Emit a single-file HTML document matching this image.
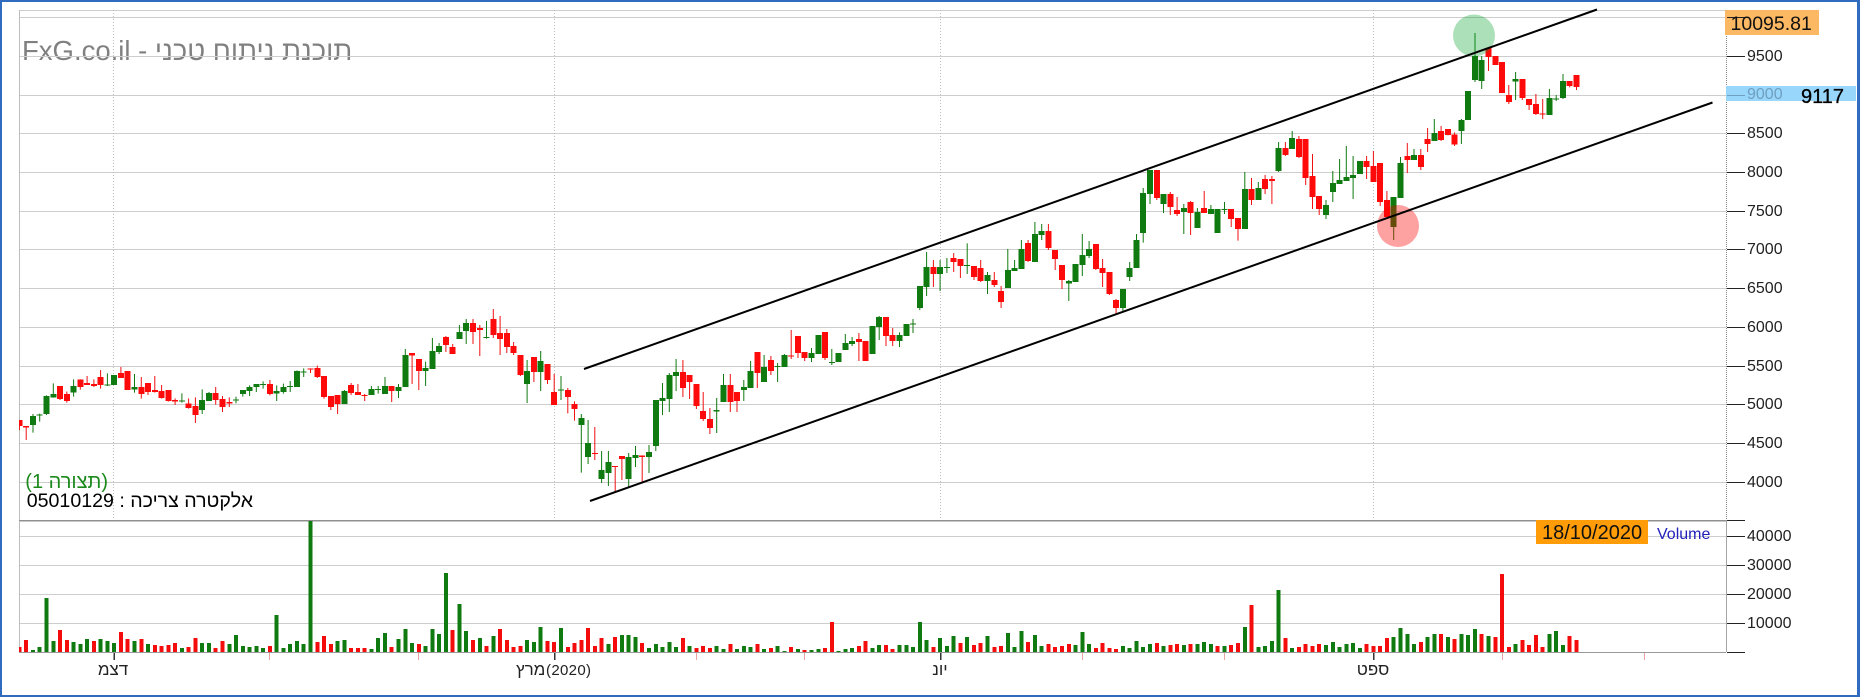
<!DOCTYPE html>
<html lang="he"><head><meta charset="utf-8"><title>FxG.co.il</title>
<style>
html,body{margin:0;padding:0;background:#fff}
#p{position:relative;width:1860px;height:697px;overflow:hidden;background:#fff;font-family:"Liberation Sans",Arial,sans-serif}
#p svg{position:absolute;left:0;top:0}
#b{position:absolute;left:0;top:0;width:1855px;height:693px;border:solid #2f6cc0;border-width:2px 3px 2px 2px}
.t{position:absolute;white-space:nowrap;line-height:1}
</style></head><body><div id="p">
<svg width="1860" height="697" viewBox="0 0 1860 697" fill="none" font-family="'Liberation Sans',Arial,sans-serif">
<text x="22" y="60" font-size="27.5" style="fill:#808080">FxG.co.il - תוכנת ניתוח טכני</text>
<g stroke="#cdcdcd" shape-rendering="crispEdges">
<path d="M19 10.5H1726M19 17.5H1726M19 56.5H1726M19 95.5H1726M19 133.5H1726M19 172.5H1726M19 211.5H1726M19 249.5H1726M19 288.5H1726M19 327.5H1726M19 366.5H1726M19 404.5H1726M19 443.5H1726M19 482.5H1726M19 536.5H1726M19 565.5H1726M19 594.5H1726M19 623.5H1726"/>
<path d="M19.5 10V652" stroke="#bdbdbd"/>
<path d="M113.5 10V518M554.5 10V518M940.5 10V518M1373.5 10V518" stroke="#bbb" stroke-dasharray="1 2"/>
<path d="M19 520.5H1726" stroke="#8f8f8f"/><path d="M19 521.5H1726" stroke="#c8c8c8"/>
<path d="M1726.5 10V520" stroke="#888" stroke-dasharray="1 1"/><path d="M1726.5 520V652" stroke="#a5a5a5"/>
</g>
<g shape-rendering="crispEdges" stroke-width="4" transform="translate(0,480) scale(1,.33333)">
<path stroke="#f40c0c" d="M19.4 517V501M26.2 517V480M60 517V450M66.8 517V480M93.9 517V483M120.9 517V456M127.7 517V477M141.3 517V477M154.8 517V495M161.6 517V498M168.3 517V495M175.1 517V489M188.6 517V501M195.4 517V474M215.7 517V504M222.5 517V483M269.9 517V498M317.3 517V486M324 517V468M330.8 517V492M351.1 517V504M357.9 517V504M364.7 517V504M391.7 517V501M418.8 517V492M452.7 517V450M473 517V480M486.5 517V498M500.1 517V447M506.8 517V480M513.6 517V501M520.4 517V498M547.5 517V483M554.2 517V486M567.8 517V501M574.5 517V489M581.3 517V480M588.1 517V444M594.8 517V498M601.6 517V474M615.2 517V471M642.2 517V489M682.9 517V474M696.4 517V504M703.2 517V498M709.9 517V504M730.3 517V492M757.3 517V492M770.9 517V504M791.2 517V501M804.7 517V510M825 517V504M831.8 517V426M858.9 517V498M865.7 517V483M886 517V495M892.7 517V507M933.4 517V501M960.4 517V489M974 517V495M980.7 517V489M994.3 517V501M1001.1 517V498M1028.1 517V486M1048.4 517V492M1055.2 517V501M1062 517V498M1068.8 517V492M1095.8 517V504M1102.6 517V489M1109.4 517V504M1116.1 517V507M1156.8 517V489M1170.3 517V495M1177.1 517V492M1190.6 517V492M1217.7 517V498M1231.2 517V495M1238 517V489M1251.5 517V375M1285.4 517V474M1298.9 517V501M1305.7 517V492M1312.5 517V498M1319.2 517V492M1366.6 517V492M1373.4 517V498M1380.2 517V498M1386.9 517V474M1420.8 517V486M1441.1 517V462M1454.6 517V477M1481.7 517V462M1495.3 517V471M1502 517V282M1508.8 517V501M1522.3 517V480M1529.1 517V495M1535.9 517V465M1542.7 517V501M1569.7 517V468M1576.5 517V480"/>
<path stroke="#0f7a0f" d="M33 517V510M39.7 517V501M46.5 517V354M53.3 517V483M73.6 517V486M80.3 517V492M87.1 517V477M100.6 517V477M107.4 517V483M114.2 517V489M134.5 517V483M148 517V492M181.9 517V504M202.2 517V489M209 517V489M229.3 517V492M236 517V465M242.8 517V498M249.6 517V501M256.3 517V498M263.1 517V504M276.7 517V405M283.4 517V504M290.2 517V492M297 517V483M303.7 517V492M310.5 517V123M337.6 517V483M344.4 517V480M371.4 517V507M378.2 517V474M385 517V459M398.5 517V477M405.3 517V447M412.1 517V489M425.6 517V498M432.4 517V447M439.1 517V462M445.9 517V279M459.4 517V372M466.2 517V453M479.8 517V474M493.3 517V468M527.1 517V480M533.9 517V486M540.7 517V441M561 517V444M608.4 517V492M621.9 517V465M628.7 517V465M635.5 517V471M649 517V504M655.8 517V492M662.5 517V501M669.3 517V486M676.1 517V501M689.6 517V498M716.7 517V498M723.5 517V507M737 517V507M743.8 517V498M750.6 517V501M764.1 517V507M777.6 517V498M784.4 517V513M798 517V507M811.5 517V510M818.3 517V507M838.6 517V513M845.3 517V507M852.1 517V504M872.4 517V504M879.2 517V495M899.5 517V495M906.3 517V495M913 517V501M919.8 517V426M926.6 517V480M940.1 517V474M946.9 517V498M953.7 517V468M967.2 517V471M987.5 517V468M1007.8 517V459M1014.6 517V501M1021.4 517V453M1034.9 517V465M1041.7 517V498M1075.5 517V495M1082.3 517V456M1089.1 517V492M1122.9 517V498M1129.7 517V504M1136.5 517V483M1143.2 517V501M1150 517V492M1163.5 517V498M1183.8 517V495M1197.4 517V492M1204.2 517V486M1210.9 517V492M1224.5 517V498M1244.8 517V441M1258.3 517V501M1265.1 517V498M1271.9 517V483M1278.6 517V330M1292.2 517V504M1326 517V495M1332.8 517V486M1339.6 517V501M1346.3 517V492M1353.1 517V489M1359.9 517V504M1393.7 517V471M1400.5 517V444M1407.3 517V462M1414 517V492M1427.6 517V471M1434.3 517V462M1447.9 517V471M1461.4 517V462M1468.2 517V465M1475 517V447M1488.5 517V468M1515.6 517V492M1549.4 517V462M1556.2 517V453M1563 517V495"/>
</g>
<g shape-rendering="crispEdges" transform="translate(0,240) scale(1,.33333)">
<path stroke="#f01010" stroke-width="1" d="M19.4 540V570M26.2 558V600M60 438V480M66.8 455V488M80.3 418V449M87.1 408V435M93.9 418V441M100.6 390V446M120.9 381V414M127.7 393V450M141.3 411V476M148 429V465M154.8 408V458M161.6 435V476M168.3 450V485M175.1 475V495M188.6 475V506M195.4 472V549M215.7 441V494M222.5 468V516M229.3 472V501M269.9 420V466M310.5 385V399M317.3 377V414M324 408V476M330.8 468V510M337.6 465V522M351.1 429V465M357.9 432V465M364.7 462V483M391.7 438V486M412.1 339V432M418.8 357V450M445.9 288V336M452.7 312V342M473 237V312M479.8 255V348M493.3 207V294M500.1 228V345M506.8 267V339M513.6 306V345M520.4 345V408M533.9 351V426M547.5 372V432M554.2 402V495M682.9 360V471M689.6 405V477M696.4 432V507M703.2 456V543M709.9 504V582M730.3 402V516M737 456V516M757.3 336V444M770.9 348V405M791.2 270V357M798 288V354M804.7 336V363M825 276V360M858.9 279V363M865.7 303V363M886 231V318M892.7 264V318M933.4 60V141M953.7 39V96M960.4 57V114M974 78V120M980.7 60V126M994.3 96V141M1001.1 138V204M1028.1 0V66M1048.4 -48V30M1055.2 30V90M1062 75V147M1095.8 12V90M1102.6 57V141M1109.4 96V165M1116.1 177V222"/>
<path stroke="#ff0a0a" stroke-width="6" d="M19.4 540V558M26.2 558V563M60 438V477M66.8 462V483M80.3 418V441M87.1 429V435M93.9 432V438M100.6 411V435M120.9 399V414M127.7 393V450M141.3 441V462M148 429V456M154.8 450V456M161.6 453V474M168.3 450V483M175.1 480V485M188.6 491V504M195.4 498V525M215.7 459V480M222.5 477V501M229.3 486V490M269.9 432V462M310.5 385V388M317.3 384V411M324 408V471M330.8 468V501M337.6 465V492M351.1 435V459M357.9 456V465M364.7 465V468M391.7 438V453M412.1 339V347M418.8 357V393M445.9 291V315M452.7 321V342M473 249V276M479.8 264V270M493.3 237V285M500.1 279V297M506.8 279V321M513.6 318V339M520.4 345V405M533.9 351V396M547.5 372V420M554.2 456V495M682.9 396V444M689.6 405V426M696.4 432V498M703.2 513V537M709.9 537V564M730.3 435V486M737 456V483M757.3 336V399M770.9 360V393M791.2 346V349M798 288V339M804.7 336V354M825 276V354M858.9 297V306M865.7 303V363M886 231V288M892.7 285V303M933.4 81V102M953.7 54V66M960.4 57V78M974 78V111M980.7 84V123M994.3 120V135M1001.1 153V186M1028.1 9V63M1048.4 -27V24M1055.2 30V57M1062 75V120M1095.8 12V87M1102.6 84V99M1109.4 96V162M1116.1 180V204"/>
<path stroke="#0f7a0f" stroke-width="1" d="M33 522V578M39.7 521V545M46.5 466V525M53.3 430V473M73.6 418V470M107.4 400V438M114.2 405V435M134.5 402V458M181.9 460V488M202.2 448V522M209 456V483M236 470V490M242.8 450V470M249.6 436V468M256.3 432V456M263.1 424V446M276.7 436V483M283.4 431V461M290.2 423V456M297 391V441M303.7 385V411M344.4 450V492M371.4 438V465M378.2 438V461M385 411V462M398.5 432V474M405.3 327V441M425.6 365V438M432.4 294V387M439.1 309V342M459.4 255V297M466.2 237V312M486.5 243V296M527.1 360V489M540.7 333V453M669.3 399V516M676.1 357V453M716.7 474V579M723.5 402V486M743.8 420V483M750.6 363V444M764.1 345V426M777.6 369V426M784.4 342V381M811.5 324V366M818.3 285V342M831.8 327V375M838.6 339V366M845.3 282V330M852.1 291V318M872.4 258V342M879.2 228V300M899.5 277V321M906.3 252V288M913 237V279M919.8 138V210M926.6 36V168M940.1 60V153M946.9 54V99M967.2 10V102M987.5 96V162M1007.8 27V144M1014.6 60V93M1021.4 0V87M1034.9 -54V66M1041.7 -48V0M1068.8 120V183M1075.5 72V126M1082.3 -18V108M1089.1 3V54M1122.9 147V213M1129.7 66V123M1136.5 -18V84"/>
<path stroke="#0f7a0f" stroke-width="6" d="M33 528V555M39.7 523V526M46.5 468V522M53.3 462V473M73.6 438V458M107.4 433V436M114.2 405V435M134.5 441V449M181.9 481V485M202.2 480V510M209 459V483M236 479V482M242.8 450V462M249.6 441V453M256.3 432V441M263.1 432V435M276.7 453V461M283.4 441V456M290.2 438V441M297 393V441M303.7 394V397M344.4 453V492M371.4 447V465M378.2 447V450M385 438V462M398.5 441V453M405.3 345V441M425.6 384V393M432.4 333V387M439.1 318V336M459.4 276V297M466.2 249V273M486.5 291V294M527.1 393V432M540.7 363V396M669.3 405V477M676.1 396V408M716.7 510V515M723.5 435V486M743.8 441V450M750.6 393V444M764.1 381V426M777.6 378V381M784.4 345V381M811.5 339V354M818.3 285V342M831.8 366V369M838.6 339V366M845.3 309V330M852.1 303V312M872.4 258V342M879.2 231V261M899.5 285V303M906.3 252V288M913 250V253M919.8 138V204M926.6 81V141M940.1 81V102M946.9 81V84M967.2 75V78M987.5 105V123M1007.8 90V144M1014.6 84V93M1021.4 27V87M1034.9 -18V66M1041.7 -27V-15M1068.8 123V131M1075.5 72V126M1082.3 45V75M1089.1 27V48M1122.9 147V204M1129.7 84V111M1136.5 0V84"/>
</g>
<g shape-rendering="crispEdges" transform="translate(0,380) scale(1,.33333)">
<path stroke="#f01010" stroke-width="1" d="M567.8 24V100M574.5 64V122M594.8 141V240M615.2 258V336M621.9 228V300M642.2 226V309"/>
<path stroke="#ff0a0a" stroke-width="6" d="M567.8 30V51M574.5 72V87M594.8 219V222M615.2 258V261M621.9 228V237M642.2 226V231"/>
<path stroke="#0f7a0f" stroke-width="1" d="M561 -12V60M581.3 102V278M588.1 120V252M601.6 213V309M608.4 213V318M628.7 219V321M635.5 198V261M649 195V279M655.8 60V213M662.5 9V105"/>
<path stroke="#0f7a0f" stroke-width="6" d="M561 28V32M581.3 114V135M588.1 189V231M601.6 270V297M608.4 246V279M628.7 231V297M635.5 225V234M649 216V231M655.8 60V198M662.5 54V63"/>
</g>
<g shape-rendering="crispEdges" transform="translate(0,120) scale(1,.33333)">
<path stroke="#f01010" stroke-width="1" d="M1156.8 150V240M1170.3 216V285M1177.1 231V288M1190.6 243V345M1204.2 213V279M1231.2 267V321M1238 294V362"/>
<path stroke="#ff0a0a" stroke-width="6" d="M1156.8 150V234M1170.3 222V261M1177.1 270V282M1190.6 246V279M1204.2 264V279M1231.2 267V297M1238 294V327"/>
<path stroke="#0f7a0f" stroke-width="1" d="M1143.2 204V368M1150 150V252M1163.5 222V279M1183.8 252V342M1197.4 264V324M1210.9 255V282M1217.7 267V339M1224.5 246V282M1244.8 156V327"/>
<path stroke="#0f7a0f" stroke-width="6" d="M1143.2 219V339M1150 150V222M1163.5 222V252M1183.8 264V276M1197.4 276V324M1210.9 267V282M1217.7 267V339M1224.5 267V270M1244.8 207V327"/>
</g>
<g shape-rendering="crispEdges" transform="scale(1,.33333)">
<path stroke="#f01010" stroke-width="1" d="M1251.5 534V615M1265.1 525V582M1271.9 528V612M1285.4 426V468M1298.9 408V474M1305.7 417V555M1312.5 462V627M1319.2 588V645M1366.6 468V537M1373.4 453V546M1380.2 489V618M1386.9 573V651M1407.3 429V519M1420.8 447V510M1427.6 384V456M1441.1 378V423M1447.9 387V406M1454.6 397V438M1488.5 144V213M1495.3 168V195M1502 186V279M1508.8 255V312M1522.3 237V300M1529.1 297V330M1535.9 282V345M1542.7 297V357M1569.7 243V262M1576.5 225V270"/>
<path stroke="#ff0a0a" stroke-width="6" d="M1251.5 567V600M1265.1 537V567M1271.9 537V543M1285.4 444V465M1298.9 417V471M1305.7 417V534M1312.5 528V591M1319.2 588V627M1366.6 483V501M1373.4 498V546M1380.2 489V606M1386.9 600V651M1407.3 468V480M1420.8 465V501M1427.6 417V432M1441.1 393V420M1447.9 387V405M1454.6 403V433M1488.5 144V171M1495.3 168V195M1502 186V279M1508.8 285V306M1522.3 237V294M1529.1 297V315M1535.9 312V342M1542.7 340V343M1569.7 243V258M1576.5 225V261"/>
<path stroke="#0f7a0f" stroke-width="1" d="M1258.3 546V600M1278.6 426V516M1292.2 393V447M1326 600V657M1332.8 513V606M1339.6 477V552M1346.3 438V543M1353.1 468V597M1359.9 483V522M1393.7 591V720M1400.5 471V594M1414 447V480M1434.3 357V423M1461.4 357V432M1468.2 273V360M1475 99V246M1481.7 168V267M1515.6 216V300M1549.4 267V345M1556.2 285V303M1563 222V297"/>
<path stroke="#0f7a0f" stroke-width="6" d="M1258.3 564V600M1278.6 444V513M1292.2 414V447M1326 615V645M1332.8 549V576M1339.6 540V552M1346.3 531V543M1353.1 525V534M1359.9 483V522M1393.7 591V681M1400.5 489V594M1414 465V480M1434.3 399V423M1461.4 360V393M1468.2 273V360M1475 168V240M1481.7 180V243M1515.6 237V245M1549.4 294V345M1556.2 295V298M1563 243V294"/>
</g>
<rect x="2" y="340" width="17" height="314" fill="#fff"/>
<g shape-rendering="crispEdges">
<path d="M19 652.5H1726" stroke="#999"/>
<path d="M269.5 653V660M418.5 653V660M696.5 653V660M804.5 653V660M1082.5 653V660M1224.5 653V660M1502.5 653V660M1644.5 653V660" stroke="#e8a3a3"/>
<path d="M114 653V660M554.5 653V660M940.5 653V660M1373.5 653V660" stroke="#333" stroke-width="1.5"/>
</g>
<circle cx="1474" cy="35.5" r="21" fill="rgba(0,160,40,.33)"/>
<circle cx="1398" cy="226" r="21" fill="rgba(250,0,0,.37)"/>
<path d="M584 369L1597 9.5M590 501L1712.5 102.5" stroke="#000" stroke-width="2"/>
<rect x="1725" y="10" width="94" height="25" fill="#fdb863"/>
<g shape-rendering="crispEdges" stroke="#222">
<path d="M1727 17.5H1745M1727 56.5H1745M1727 133.5H1745M1727 172.5H1745M1727 211.5H1745M1727 249.5H1745M1727 288.5H1745M1727 327.5H1745M1727 366.5H1745M1727 404.5H1745M1727 443.5H1745M1727 482.5H1745M1727 520.5H1745M1727 536.5H1745M1727 565.5H1745M1727 594.5H1745M1727 623.5H1745M1727 652.5H1745"/>
</g>
<g font-size="16" style="fill:#222">
<text x="1747" y="61">9500</text><text x="1747" y="138">8500</text><text x="1747" y="177">8000</text><text x="1747" y="216">7500</text><text x="1747" y="254">7000</text><text x="1747" y="293">6500</text><text x="1747" y="332">6000</text><text x="1747" y="371">5500</text><text x="1747" y="409">5000</text><text x="1747" y="448">4500</text><text x="1747" y="487">4000</text>
<text x="1747" y="541">40000</text><text x="1747" y="570">30000</text><text x="1747" y="599">20000</text><text x="1747" y="628">10000</text>
<text x="113" y="675" font-size="17" text-anchor="middle">דצמ</text><text x="516" y="675" font-size="17">מרץ</text><text x="546" y="675" font-size="15" textLength="45">(2020)</text><text x="940" y="675" font-size="17" text-anchor="middle">יונ</text><text x="1373" y="675" font-size="17" text-anchor="middle">ספט</text>
</g>
<rect x="1726" y="86" width="130" height="15" fill="#99d6fb"/>
<path d="M1727 95.5H1745" stroke="#6f9fbf" shape-rendering="crispEdges"/>
<text x="1747" y="99" font-size="16" style="fill:#6f9fbf">9000</text>
<text x="1801" y="103" font-size="20" style="fill:#000;stroke:#000;stroke-width:.3">9117</text>
<text x="1730.5" y="30" font-size="19.5" style="fill:#111">10095.81</text>
<rect x="1536" y="520" width="112" height="24" fill="#ff9c08"/>
<text x="1542" y="539" font-size="20" style="fill:#111">18/10/2020</text>
<text x="1657" y="539" font-size="16" style="fill:#2222bb">Volume</text>
</svg>
<div class="t" dir="rtl" style="left:0;width:108px;top:472px;font-size:20px;color:#1b8a1b;text-align:right">(תצורה 1)</div>
<div class="t" dir="rtl" style="left:0;width:253px;top:492px;font-size:19.6px;color:#000;text-align:right">אלקטרה צריכה : 05010129</div>
<div id="b"></div>
</div></body></html>
